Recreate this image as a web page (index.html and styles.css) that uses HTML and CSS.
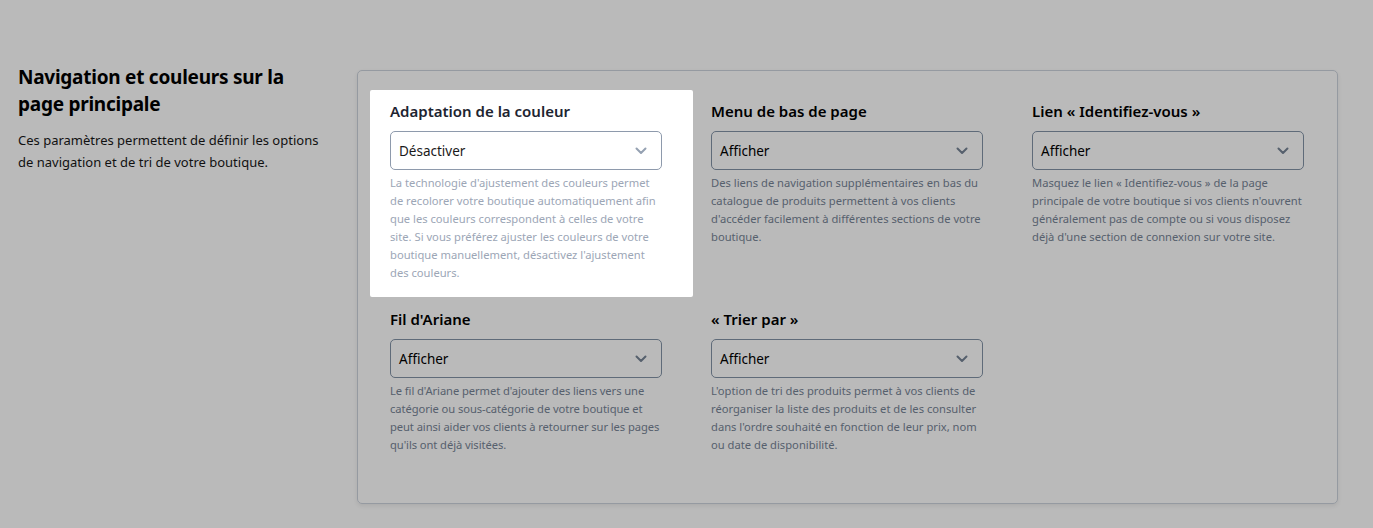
FILE: index.html
```html
<!DOCTYPE html>
<html lang="fr">
<head>
<meta charset="utf-8">
<link rel="stylesheet" href="styles.css">
</head>
<body>
<div class="page">
  <aside class="intro">
    <h2 class="intro-title">Navigation et couleurs sur la page principale</h2>
    <p class="intro-text">Ces paramètres permettent de définir les options de navigation et de tri de votre boutique.</p>
  </aside>
  <section class="card">
    <div class="grid">
      <div class="field field-highlight">
        <label class="field-label">Adaptation de la couleur</label>
        <div class="select"><span>Désactiver</span><svg class="chev" viewBox="0 0 12 8" width="12" height="8"><path d="M1.5 1.5 6 6 10.5 1.5" fill="none" stroke="currentColor" stroke-width="2" stroke-linecap="round" stroke-linejoin="round"/></svg></div>
        <p class="help">La technologie d'ajustement des couleurs permet de recolorer votre boutique automatiquement afin que les couleurs correspondent à celles de votre site. Si vous préférez ajuster les couleurs de votre boutique manuellement, désactivez l'ajustement des couleurs.</p>
      </div>
      <div class="field">
        <label class="field-label">Menu de bas de page</label>
        <div class="select"><span>Afficher</span><svg class="chev" viewBox="0 0 12 8" width="12" height="8"><path d="M1.5 1.5 6 6 10.5 1.5" fill="none" stroke="currentColor" stroke-width="2" stroke-linecap="round" stroke-linejoin="round"/></svg></div>
        <p class="help">Des liens de navigation supplémentaires en bas du catalogue de produits permettent à vos clients d'accéder facilement à différentes sections de votre boutique.</p>
      </div>
      <div class="field">
        <label class="field-label">Lien « Identifiez-vous »</label>
        <div class="select"><span>Afficher</span><svg class="chev" viewBox="0 0 12 8" width="12" height="8"><path d="M1.5 1.5 6 6 10.5 1.5" fill="none" stroke="currentColor" stroke-width="2" stroke-linecap="round" stroke-linejoin="round"/></svg></div>
        <p class="help">Masquez le lien « Identifiez-vous » de la page principale de votre boutique si vos clients n'ouvrent généralement pas de compte ou si vous disposez déjà d'une section de connexion sur votre site.</p>
      </div>
      <div class="field">
        <label class="field-label">Fil d'Ariane</label>
        <div class="select"><span>Afficher</span><svg class="chev" viewBox="0 0 12 8" width="12" height="8"><path d="M1.5 1.5 6 6 10.5 1.5" fill="none" stroke="currentColor" stroke-width="2" stroke-linecap="round" stroke-linejoin="round"/></svg></div>
        <p class="help help-tight">Le fil d'Ariane permet d'ajouter des liens vers une catégorie ou sous-catégorie de votre boutique et peut ainsi aider vos clients à retourner sur les pages qu'ils ont déjà visitées.</p>
      </div>
      <div class="field">
        <label class="field-label">« Trier par »</label>
        <div class="select"><span>Afficher</span><svg class="chev" viewBox="0 0 12 8" width="12" height="8"><path d="M1.5 1.5 6 6 10.5 1.5" fill="none" stroke="currentColor" stroke-width="2" stroke-linecap="round" stroke-linejoin="round"/></svg></div>
        <p class="help">L'option de tri des produits permet à vos clients de réorganiser la liste des produits et de les consulter dans l'ordre souhaité en fonction de leur prix, nom ou date de disponibilité.</p>
      </div>
    </div>
  </section>
</div>
</body>
</html>
```

FILE: styles.css
```css
* { box-sizing: border-box; }
html, body {
  margin: 0;
  padding: 0;
  background: #bababa;
  font-family: "Noto Sans", "Open Sans", "DejaVu Sans", sans-serif;
  color: #000;
}
.page {
  display: flex;
  align-items: flex-start;
  padding: 64px 36px 24px 18px;
}
.intro {
  width: 339px;
  flex: none;
}
.intro-title {
  margin: 0;
  font-size: 19px;
  line-height: 27px;
  font-weight: 700;
  letter-spacing: -0.25px;
  color: #000;
  width: 300px;
}
.intro-text {
  margin: 11px 0 0;
  font-size: 13px;
  line-height: 22px;
  color: #111;
  width: 305px;
}
.card {
  flex: 1;
  margin-top: 6px;
  border: 1px solid #959aa1;
  border-radius: 5px;
  box-shadow: 0 2px 4px rgba(0,0,0,0.08);
  padding: 28px 32px 49px;
}
.grid {
  display: grid;
  grid-template-columns: repeat(3, 273px);
  column-gap: 48px;
  row-gap: 25px;
}
.field {
  position: relative;
  display: flex;
  flex-direction: column;
}
.field-highlight::before {
  content: "";
  position: absolute;
  left: -20px;
  right: -30px;
  top: -9px;
  bottom: -15px;
  background: #fff;
  border-radius: 2px;
  z-index: 0;
}
.field > * { position: relative; z-index: 1; }
.field-label {
  font-size: 15px;
  line-height: 24px;
  font-weight: 600;
  color: #000;
}
.select {
  margin-top: 8px;
  height: 39px;
  width: 272px;
  border: 1px solid #5f6b79;
  border-radius: 5px;
  display: flex;
  align-items: center;
  justify-content: space-between;
  padding: 0 14px 0 8px;
  font-size: 13.5px;
  color: #000;
}
.chev { color: #56606d; }
.help {
  margin: 4px 0 0;
  font-size: 11.2px;
  line-height: 18px;
  color: #56606d;
}
.help-tight { letter-spacing: -0.08px; }
.field-highlight .field-label { color: #1d2430; }
.field-highlight .select { border-color: #8e9aac; color: #1a1a1a; }
.field-highlight .chev { color: #95a1b2; }
.field-highlight .help { color: #9ca6b6; }
```
